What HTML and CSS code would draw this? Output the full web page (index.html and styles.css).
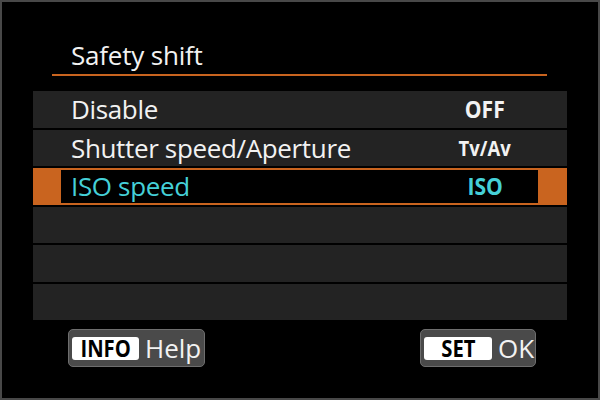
FILE: index.html
```html
<!DOCTYPE html>
<html lang="en">
<head>
    <meta charset="UTF-8">
    <title>Safety shift</title>
    <link rel="stylesheet" href="styles.css">
</head>
<body>
    <div class="screen">
        <div class="title">Safety shift</div>

        <ul class="menu">
            <li class="item">
                <div class="item-inner">
                    <span class="label">Disable</span>
                    <span class="value"><b>OFF</b></span>
                </div>
            </li>
            <li class="item">
                <div class="item-inner">
                    <span class="label">Shutter speed/Aperture</span>
                    <span class="value value-small"><b>Tv/Av</b></span>
                </div>
            </li>
            <li class="item selected">
                <div class="item-inner">
                    <span class="label">ISO speed</span>
                    <span class="value"><b>ISO</b></span>
                </div>
            </li>
            <li class="item"></li>
            <li class="item"></li>
            <li class="item"></li>
        </ul>

        <div class="footer">
            <div class="btn btn-info">
                <span class="key"><b>INFO</b></span>
                <span class="btn-label">Help</span>
            </div>
            <div class="btn btn-set">
                <span class="key"><b>SET</b></span>
                <span class="btn-label">OK</span>
            </div>
        </div>
    </div>
</body>
</html>
```

FILE: styles.css
```css
/* Base */
:root {
    --orange: #c9641f;
    --cyan: #45d0d8;
    --row-bg: #232323;
    --text: #f2f2f2;
}

* {
    margin: 0;
    padding: 0;
    box-sizing: border-box;
}

body {
    background: #000;
    font-family: 'Open Sans', 'Noto Sans', sans-serif;
    color: var(--text);
}

.screen {
    width: 600px;
    height: 400px;
    border: 2px solid #484848;
    background: #000;
    padding-top: 36px;
}

/* Title */
.title {
    margin-left: 50px;
    width: 495px;
    padding: 0 0 2px 19px;
    font-size: 26px;
    letter-spacing: -0.2px;
    line-height: 34px;
    border-bottom: 2px solid var(--orange);
}

/* Menu list */
.menu {
    list-style: none;
    margin: 15px 0 0 31px;
    width: 534px;
    display: flex;
    flex-direction: column;
    gap: 2px;
}

.item {
    height: 36.5px;
    background: var(--row-bg);
    padding: 2px 29px 2px 28px;
}

.item-inner {
    height: 100%;
    display: flex;
    align-items: center;
    padding-left: 10px;
}

.label {
    flex: 1;
    font-size: 26px;
    letter-spacing: -0.35px;
    line-height: 34px;
}

.value {
    width: 100px;
    margin-right: 3px;
    text-align: center;
    font-size: 24px;
    line-height: 34px;
}

/* condensed bold, like the camera font */
.value b,
.key b {
    display: inline-block;
    font-weight: 700;
    transform: scaleX(0.88);
}

.value-small {
    font-size: 21px;
}

.selected {
    background: var(--orange);
}

.selected .item-inner {
    background: #000;
}

.selected .label,
.selected .value {
    color: var(--cyan);
}

/* Footer buttons */
.footer {
    display: flex;
    justify-content: space-between;
    margin-top: 9px;
    padding: 0 62px 0 66px;
}

.btn {
    height: 38px;
    display: flex;
    align-items: center;
    padding-left: 3px;
    background: #4a4a4a;
    border: 1px solid #6e6e6e;
    border-radius: 5px;
}

.btn-info {
    width: 137px;
}

.btn-set {
    width: 116px;
}

.key {
    width: 67px;
    height: 23px;
    background: #fff;
    color: #000;
    border-radius: 3px;
    text-align: center;
    font-size: 23px;
    line-height: 23px;
}

.btn-set .key {
    width: 68px;
}

.btn-label {
    margin-left: 6px;
    font-size: 26px;
    line-height: 34px;
}
```
